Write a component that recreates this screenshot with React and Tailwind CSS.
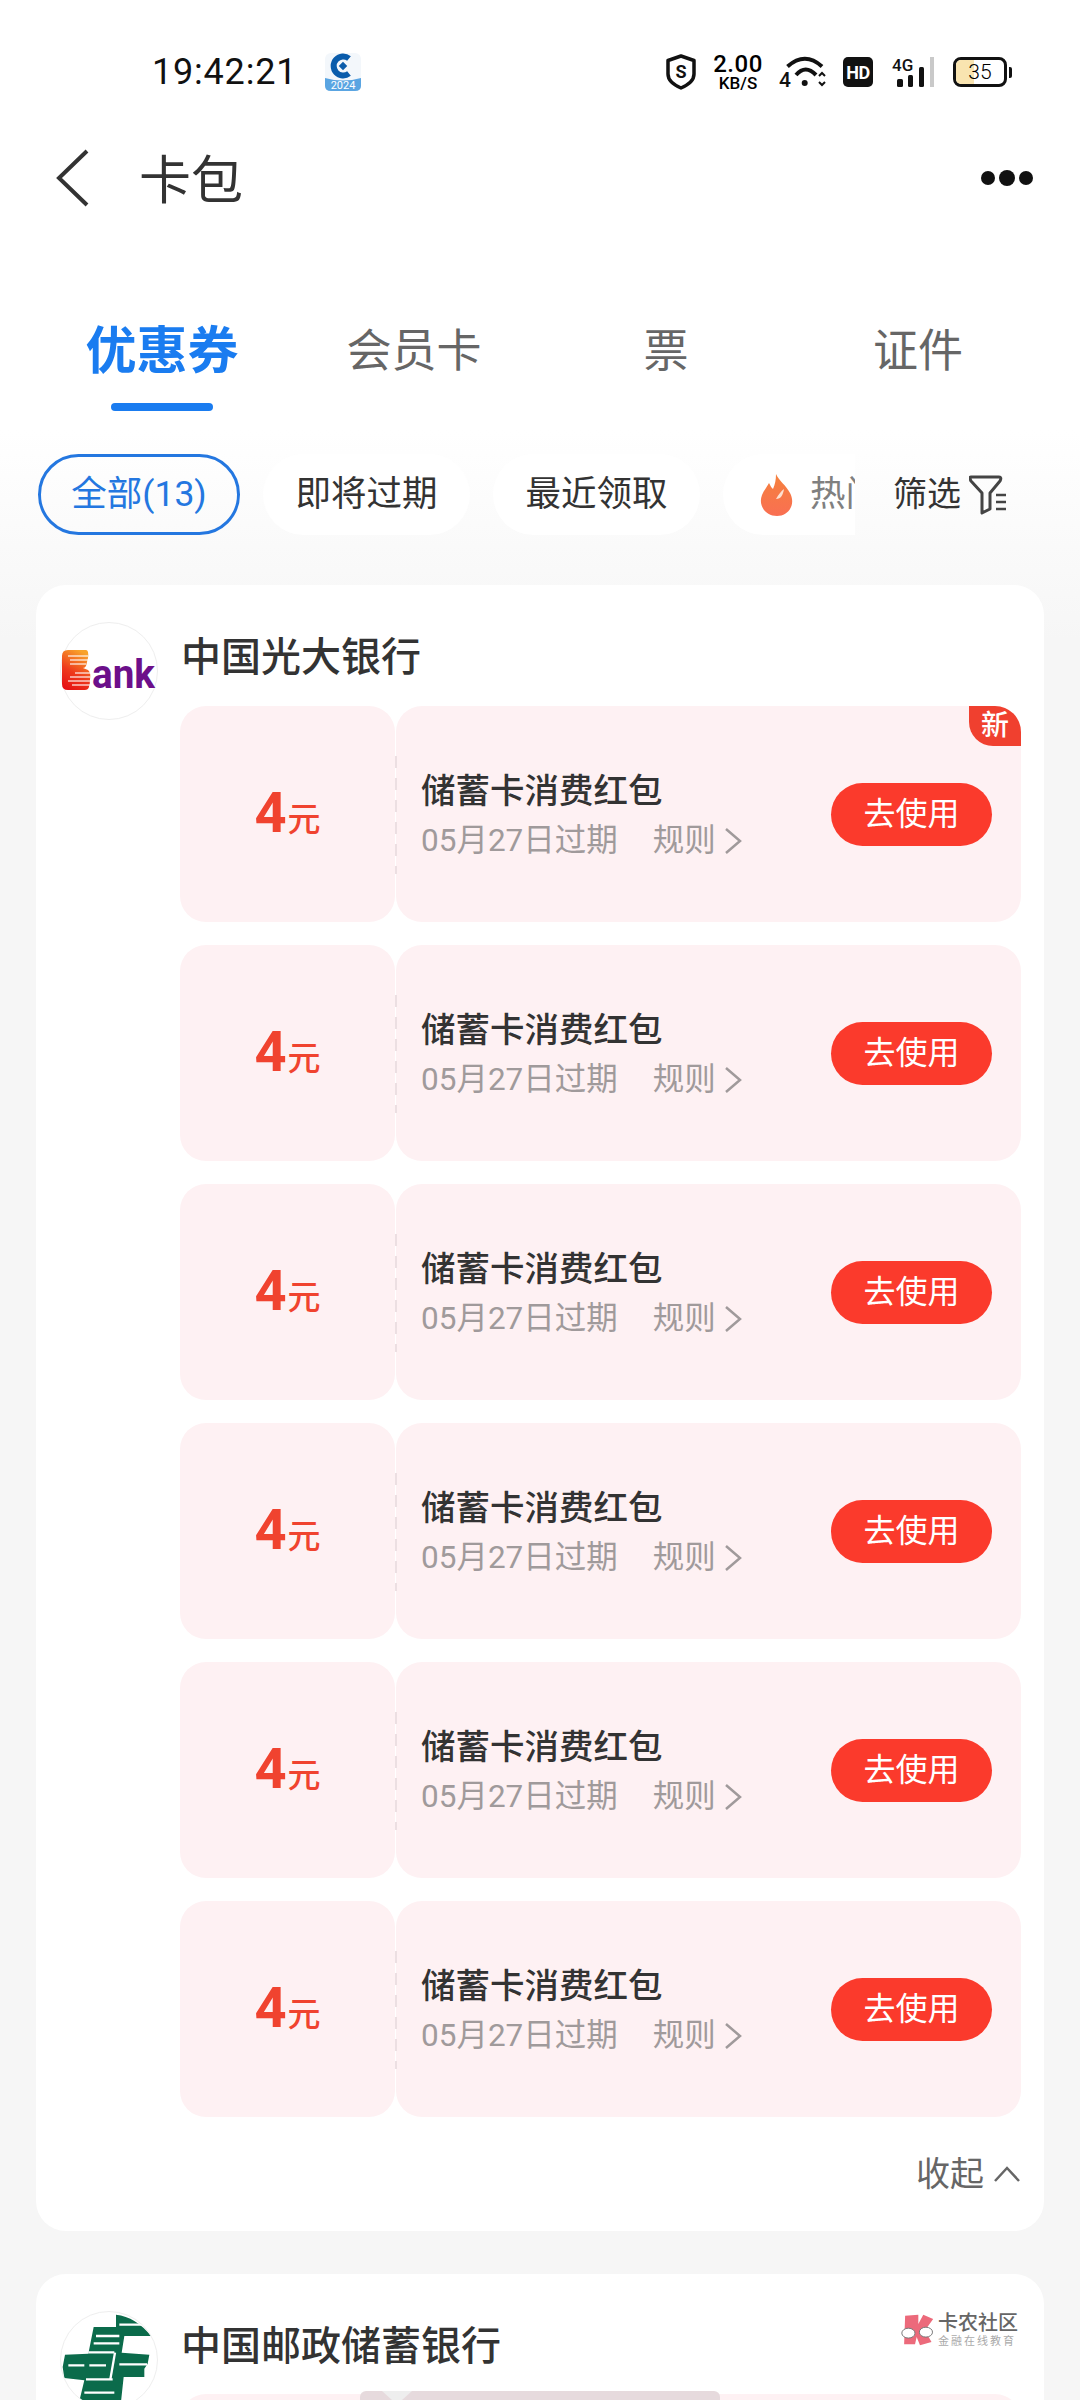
import React from 'react';

const COUPONS = [true, false, false, false, false, false];

function StatusIcons() {
  return (
    <div className="flex items-center h-[40px] mr-[68px] text-black">
      <svg width="32" height="36" viewBox="0 0 32 36">
        <path d="M16 2 L29 6.500 V20 C29 27 23 31 16 34 C9 31 3 27 3 20 V6.500 Z" fill="none" stroke="#111" strokeWidth="3.500" strokeLinejoin="round" />
        <text x="16" y="24" textAnchor="middle" fontSize="18" fontWeight="700" fill="#111" fontFamily="Roboto, sans-serif">S</text>
      </svg>
      <div className="ml-[15px] w-[52px] flex flex-col items-center">
        <span className="text-[24px] font-medium tracking-[0.5px] leading-[22px]">2.00</span>
        <span className="text-[17px] font-medium leading-[17px]">KB/S</span>
      </div>
      <svg width="48" height="40" viewBox="0 -4 48 40" className="ml-[15px]">
        <text x="0" y="31" fontSize="21" fontWeight="500" fill="#111" fontFamily="Roboto, sans-serif">4</text>
        <path d="M8.500 10.500 Q26 -5 43 10.500" fill="none" stroke="#111" strokeWidth="4" />
        <path d="M17 19 Q26.500 8 37 19" fill="none" stroke="#111" strokeWidth="4" />
        <circle cx="25.700" cy="27" r="3" fill="#111" />
        <path d="M40 20 L43 17 L46 20 M40 26 L43 29 L46 26" fill="none" stroke="#111" strokeWidth="2" />
      </svg>
      <div className="ml-[16px] w-[30px] h-[30px] bg-[#111] rounded-[5px] text-white text-[18px] font-bold flex items-center justify-center tracking-[-0.5px]">HD</div>
      <svg width="42" height="30" viewBox="0 0 42 30" className="ml-[19px]">
        <text x="0" y="14" fontSize="17" fontWeight="500" fill="#111" fontFamily="Roboto, sans-serif">4G</text>
        <rect x="5" y="22" width="6" height="8" rx="1.500" fill="#111" />
        <rect x="16" y="18" width="5" height="12" rx="1.500" fill="#111" />
        <rect x="27" y="10" width="5" height="20" rx="1.500" fill="#111" />
        <rect x="38" y="0" width="4" height="30" fill="#c9c9c9" />
      </svg>
      <div className="ml-[19px] relative w-[54px] h-[30px] border-[3px] border-[#111] rounded-[8px] overflow-hidden flex items-center justify-center">
        <div className="absolute left-0 top-0 bottom-0 w-[18px] bg-[#f9e4b0]" />
        <span className="relative text-[21px] font-light leading-none">35</span>
      </div>
      <div className="ml-[2px] w-[3px] h-[11px] bg-[#111] rounded-r-[2px]" />
    </div>
  );
}

function BankLogo() {
  return (
    <div className="w-[98px] h-[98px] shrink-0 rounded-full border border-[#eeeeee] bg-white flex items-center justify-center">
      <svg width="96" height="54" viewBox="0 -6 96 54">
        <defs>
          <linearGradient id="e" x1="0.6" y1="0" x2="0.2" y2="1">
            <stop offset="0" stopColor="#f8a32a" />
            <stop offset="0.55" stopColor="#ee3a1c" />
            <stop offset="1" stopColor="#e50f14" />
          </linearGradient>
        </defs>
        <path d="M1 6 Q1 0 7 0 H25 Q28 0 27 8 L25 16 Q24 18 22 18 L27 20 Q30 22 29 30 Q29 40 24 40 H7 Q1 40 1 34 Z" fill="url(#e)" />
        <path d="M7 6 H27 M9 10 H27 M9 14 H25 M14 23 H29 M9 27 H29 M7 31 H29 M11 35 H29" stroke="#fff" strokeOpacity="0.75" strokeWidth="1.300" />
        <text x="31" y="38" fontSize="40" fontWeight="700" fill="#6c0f8a" fontFamily="Roboto, sans-serif" textLength="63" lengthAdjust="spacingAndGlyphs">ank</text>
      </svg>
    </div>
  );
}

function PostLogo() {
  return (
    <div className="w-[98px] h-[98px] shrink-0 rounded-full border border-[#eeeeee] bg-white overflow-hidden">
      <svg width="96" height="96" viewBox="30 30 288 288">
        <path d="M195 38 Q255 45 300 102 L220 102 L212 152 L295 158 L290 185 L280 200 L280 225 L218 225 L208 318 L80 318 L100 235 L40 228 L35 195 L42 158 L112 155 L128 75 L195 75 Z" fill="#0b6b4b" />
        <g stroke="#fff" strokeWidth="7" fill="none">
          <path d="M205 68 H275" />
          <path d="M135 102 H205" />
          <path d="M128 124 H205" />
          <path d="M112 151 H190" />
          <path d="M205 187 H288" />
          <path d="M52 190 H100 M115 190 H165" />
          <path d="M105 232 H185" />
          <path d="M100 272 H190" />
          <path d="M192 152 L178 232" />
        </g>
      </svg>
    </div>
  );
}

function CouponRow({ isNew }) {
  return (
    <div className="relative flex h-[216px]">
      <div className="w-[215px] shrink-0 rounded-[26px] bg-[#fef1f3] flex items-end justify-center pb-[81px] text-[#f0432f]">
        <span className="text-[56px] font-bold leading-[56px]">4</span>
        <span className="ml-[1px] text-[33px] font-medium leading-[42px]">元</span>
      </div>
      <div className="ml-[1px] flex-1 rounded-[26px] bg-[#fef1f3] flex items-center pl-[25px] pr-[29px]">
        <div className="flex-1 pt-[3px]">
          <div className="text-[34.500px] font-medium text-[#333333] leading-[48px]">储蓄卡消费红包</div>
          <div className="pt-[3px] flex items-center text-[31.500px] text-[#a09a9b] leading-[46px]">
            <span>05月27日过期</span>
            <span className="ml-[35px]">规则</span>
            <svg width="20" height="28" viewBox="0 0 20 28" className="ml-[7px]">
              <path d="M3 2 L17 14 L3 26" fill="none" stroke="#a09a9b" strokeWidth="2.500" />
            </svg>
          </div>
        </div>
        <button className="w-[161px] h-[63px] rounded-full bg-[#fb3a2c] text-white text-[32px] flex items-center justify-center">去使用</button>
      </div>
      <div className="absolute left-[215px] top-[50px] w-[2px] h-[118px] bg-[repeating-linear-gradient(#ecdfe2_0,#ecdfe2_12px,transparent_12px,transparent_22px)]" />
      {isNew && (
        <div className="absolute right-0 top-0 w-[52px] h-[40px] bg-[#f0402f] rounded-tr-[26px] rounded-bl-[24px] text-white text-[28px] font-medium leading-[40px] text-center">新</div>
      )}
    </div>
  );
}

export default function App() {
  return (
    <div
      className="relative w-[1080px] h-[2400px] overflow-hidden bg-[linear-gradient(#ffffff_0,#ffffff_430px,#f6f6f6_640px)]"
      style={{ fontFamily: 'Roboto, "Noto Sans CJK SC", sans-serif' }}
    >
      {/* status bar */}
      <div className="h-[140px] pt-[4px] flex items-center justify-between pl-[152px]">
        <div className="flex items-center">
          <span className="text-[36px] text-[#111111] tracking-[0.8px]">19:42:21</span>
          <svg width="36" height="38" viewBox="0 0 36 38" className="ml-[28px]">
            <rect x="0" y="0" width="36" height="38" rx="6" fill="#f3f7fb" />
            <path d="M24 5.500 A9.500 9.500 0 1 0 24 20.500" fill="none" stroke="#0a5cab" strokeWidth="6" />
            <rect x="15" y="10" width="6" height="6" transform="rotate(45 18 13)" fill="#0a5cab" />
            <path d="M0 25 Q18 30 36 25 V33 Q36 38 30 38 H6 Q0 38 0 33 Z" fill="#5aa5e2" />
            <text x="18" y="36" textAnchor="middle" fontSize="11" fill="#fff" fontFamily="Roboto, sans-serif">2024</text>
          </svg>
        </div>
        <StatusIcons />
      </div>

      {/* nav */}
      <div className="h-[76px] flex items-center pl-[55px] pr-[45px]">
        <svg width="34" height="58" viewBox="0 0 34 58">
          <path d="M32 2 L4 29 L32 56" fill="none" stroke="#333333" strokeWidth="4" />
        </svg>
        <span className="ml-[50px] mt-[8px] text-[52px] text-[#333333] leading-none">卡包</span>
        <div className="ml-auto mr-[2px] flex items-center gap-[4px]">
          <div className="w-[14px] h-[14px] rounded-full bg-[#111111]" />
          <div className="w-[16px] h-[16px] rounded-full bg-[#111111]" />
          <div className="w-[14px] h-[14px] rounded-full bg-[#111111]" />
        </div>
      </div>

      {/* tabs */}
      <div className="mt-[106px] pl-[36px] grid grid-cols-[252px_252px_252px_252px] text-center">
        <div className="text-[51px] font-bold leading-[60px] text-[#1a7cf0]">优惠券</div>
        <div className="text-[45px] leading-[60px] text-[#666666]">会员卡</div>
        <div className="text-[45px] leading-[60px] text-[#666666]">票</div>
        <div className="text-[45px] leading-[60px] text-[#666666]">证件</div>
      </div>
      <div className="mt-[21px] ml-[111px] w-[102px] h-[8px] rounded-full bg-[#1a7cf0]" />

      {/* filter chips */}
      <div className="mt-[43px] h-[81px] flex items-center">
        <div className="relative w-[855px] h-full overflow-hidden flex items-center pl-[38px] gap-[23px] text-[35.500px] text-[#333333] shrink-0">
          <div className="w-[202px] h-[81px] shrink-0 rounded-full border-[3px] border-[#2477e0] text-[#2477e0] flex items-center justify-center">全部(13)</div>
          <div className="w-[207px] h-[81px] shrink-0 rounded-full bg-white flex items-center justify-center">即将过期</div>
          <div className="w-[207px] h-[81px] shrink-0 rounded-full bg-white flex items-center justify-center">最近领取</div>
          <div className="w-[230px] h-[81px] shrink-0 rounded-full bg-white flex items-center pl-[36px] text-[#808080]">
            <svg width="36" height="44" viewBox="0 0 36 44">
              <defs>
                <linearGradient id="flame" x1="0" y1="0" x2="0" y2="1">
                  <stop offset="0" stopColor="#f5813d" />
                  <stop offset="1" stopColor="#f96f52" />
                </linearGradient>
              </defs>
              <path d="M17 1 C20 8 27 12 31 20 C37 31 30 43 18 43 C6 43 -1 32 3 22 C5 17 8 14 10 10 C12 14 13 15 14 16 C16 11 17 7 17 1 Z" fill="url(#flame)" />
              <path d="M17 26 C20 21 22 18 25 16 C24 22 22 26 17 26 Z" fill="#fde0d0" />
            </svg>
            <span className="ml-[15px]">热门</span>
          </div>
        </div>
        <span className="ml-[38px] text-[34px] text-[#333333]">筛选</span>
        <svg width="38" height="40" viewBox="0 0 38 40" className="ml-[8px]">
          <path d="M2 2 H30 Q33 2 31 6 L21 18 V34 L13 38 V18 L2 6 Q0 2 2 2 Z" fill="none" stroke="#444444" strokeWidth="3" strokeLinejoin="round" />
          <path d="M27 20 H37 M27 27 H37 M27 34 H37" stroke="#444444" strokeWidth="2.500" />
        </svg>
      </div>

      {/* first bank */}
      <section className="mt-[50px] mx-[36px] rounded-[30px] bg-white pt-[37px] pl-[24px] pr-[23px] flex">
        <BankLogo />
        <div className="flex-1 ml-[22px]">
          <div className="h-[84px] pb-[12px] pl-[1px] flex items-center text-[40px] font-medium text-[#333333]">中国光大银行</div>
          <div className="flex flex-col gap-[23px]">
            {COUPONS.map((isNew, i) => (
              <CouponRow key={i} isNew={isNew} />
            ))}
          </div>
          <div className="h-[114px] flex items-center justify-end text-[34px] text-[#666666]">
            <span>收起</span>
            <svg width="28" height="18" viewBox="0 0 28 18" className="ml-[9px]">
              <path d="M2 16 L14 3 L26 16" fill="none" stroke="#666666" strokeWidth="2.500" />
            </svg>
          </div>
        </div>
      </section>

      {/* second bank, cut off by the screen edge */}
      <section className="mt-[43px] mx-[36px] rounded-t-[30px] bg-white pt-[37px] pl-[24px] pr-[23px] flex">
        <PostLogo />
        <div className="flex-1 ml-[22px]">
          <div className="h-[83px] pb-[12px] pl-[1px] flex items-center text-[40px] font-medium text-[#333333]">中国邮政储蓄银行</div>
          <div className="h-[216px] rounded-[26px] bg-[#fef1f3]" />
        </div>
      </section>

      {/* watermark */}
      <div className="absolute left-[900px] top-[2312px] flex items-center">
        <svg width="35" height="33" viewBox="30 40 105 100">
          <path d="M45 45 L85 42 L85 70 L100 42 L130 55 L105 90 L125 125 L90 135 L80 110 L75 132 L42 132 Z" fill="#ec6a7b" />
          <ellipse cx="55" cy="98" rx="20" ry="15" fill="#fff" stroke="#777" strokeWidth="3" />
          <ellipse cx="108" cy="95" rx="20" ry="15" fill="#fff" stroke="#777" strokeWidth="3" />
        </svg>
        <div className="ml-[3px] flex flex-col items-start">
          <span className="text-[20px] font-medium text-[#666666] leading-[23px]">卡农社区</span>
          <span className="text-[11px] text-[#aaaaaa] leading-[14px] tracking-[2px]">金融在线教育</span>
        </div>
      </div>

      {/* gesture pill */}
      <div className="absolute left-[360px] top-[2391px] w-[360px] h-[9px] rounded-t-[6px] overflow-hidden bg-[#e6dadd]">
        <svg width="30" height="9" viewBox="0 0 30 9" className="ml-[22px]">
          <path d="M0 0 H30 L20 9 H10 Z" fill="#eeeeee" />
        </svg>
      </div>
    </div>
  );
}
